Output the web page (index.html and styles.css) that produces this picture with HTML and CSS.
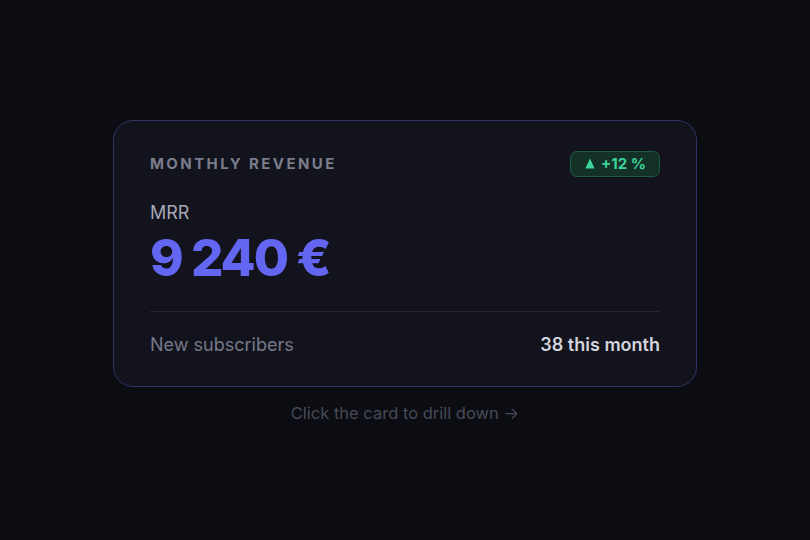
FILE: index.html
```html
<!DOCTYPE html>
<html lang="en">
<head>
  <meta charset="UTF-8">
  <meta name="viewport" content="width=device-width, initial-scale=1.0">
  <title>Monthly Revenue</title>
  <link rel="stylesheet" href="styles.css">
</head>
<body>
  <div class="page">
    <div class="card">
      <div class="card-head">
        <div class="card-title">Monthly Revenue</div>
        <div class="badge">
          <svg class="badge-arrow" width="10" height="11" viewBox="0 0 10 11"><path d="M5 0.5 L9.6 10.5 L0.4 10.5 Z" fill="currentColor"/></svg>
          <span>+12 %</span>
        </div>
      </div>
      <div class="metric-label">MRR</div>
      <div class="metric-value">9 240 €</div>
      <div class="divider"></div>
      <div class="card-foot">
        <span class="foot-label">New subscribers</span>
        <span class="foot-value">38 this month</span>
      </div>
    </div>
    <div class="hint">Click the card to drill down →</div>
  </div>
</body>
</html>
```

FILE: styles.css
```css
html, body {
  margin: 0;
  height: 100%;
}

body {
  background: #0c0d13;
  font-family: Inter, "Noto Sans", sans-serif;
  color: #c9cbd6;
}

.page {
  box-sizing: border-box;
  height: 100%;
  padding-top: 2px;
  display: flex;
  flex-direction: column;
  align-items: center;
  justify-content: center;
  gap: 16px;
}

.card {
  width: 510px;
  padding: 30px 36px 31px 36px;
  background: #12131d;
  border: 1px solid #343166;
  border-radius: 20px;
}

.card-head {
  display: flex;
  justify-content: space-between;
  align-items: center;
}

.card-title {
  font-size: 15px;
  font-weight: 700;
  letter-spacing: 2.4px;
  text-transform: uppercase;
  color: #7a7d8c;
}

.badge {
  height: 24px;
  padding: 0 13px 0 14px;
  display: flex;
  align-items: center;
  gap: 6px;
  background: #133127;
  border: 1px solid #1f5b43;
  border-radius: 7px;
  color: #3ed39a;
  font-size: 15px;
  font-weight: 700;
}

.badge-arrow {
  display: block;
}

.metric-label {
  margin-top: 25px;
  font-size: 18px;
  color: #a7a9b5;
}

.metric-value {
  margin-top: 4px;
  font-size: 51px;
  font-weight: 800;
  letter-spacing: -2px;
  line-height: 62px;
  color: #6366f1;
}

.divider {
  height: 1px;
  margin-top: 22px;
  background: #24252f;
}

.card-foot {
  margin-top: 22px;
  display: flex;
  justify-content: space-between;
  font-size: 18px;
}

.foot-label {
  color: #767988;
}

.foot-value {
  font-weight: 600;
  color: #d2d4de;
}

.hint {
  font-size: 16.5px;
  color: #474a57;
}
```
